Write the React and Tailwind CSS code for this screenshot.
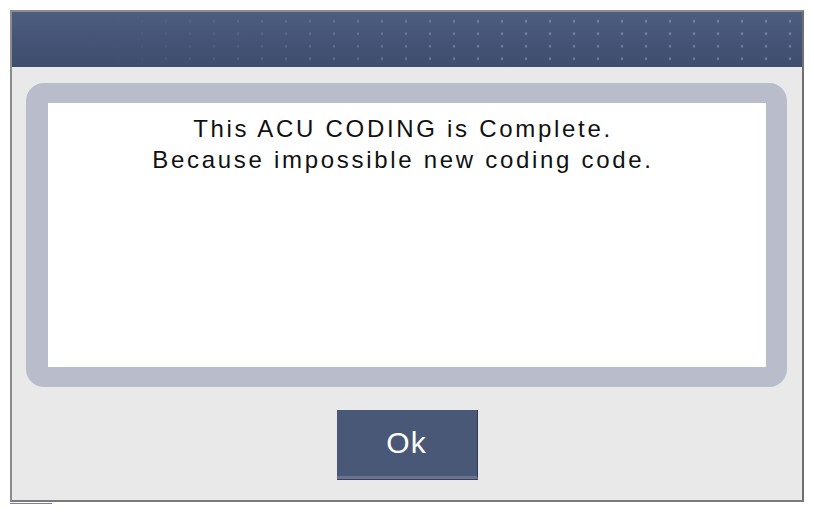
import React from "react";

const Header = () => (
  <div className="h-[55px] w-full bg-[linear-gradient(to_bottom,#4d5d7f,#3e4d6e)]">
    <div className="h-full w-full bg-[radial-gradient(circle,rgba(140,155,190,0.6)_1px,transparent_1.6px)] bg-[length:24px_12.5px] bg-[position:-2px_3px] [mask-image:linear-gradient(to_right,transparent_10%,black_65%)]" />
  </div>
);

const OkButton = () => (
  <button className="w-[141px] h-[69px] bg-[#4a5878] border-r border-r-[#2f3850] border-b-[3px] border-b-[#6a7390] shadow-[0_1px_0_#3a4256] text-white font-['Liberation_Sans',sans-serif] text-[30px] leading-none tracking-[1px] flex items-center justify-center">
    Ok
  </button>
);

export default function App() {
  return (
    <div className="w-[814px] h-[514px] bg-white relative">
      <div className="ml-[10px] pt-[10px]">
        <div className="w-[794px] h-[492px] border-2 border-[#8c8c8c] border-r-[#6f6f6f] border-b-[#7a7a7a] bg-[#e9e9e9] flex flex-col">
          <Header />
          <div className="mt-[16px] ml-[14px] w-[761px] h-[304px] rounded-[18px] bg-[#b8bccb] p-[20px] pl-[22px] pr-[21px]">
            <div className="w-full h-full bg-white pt-[10px] pr-[8px] text-center text-[#111] font-['Liberation_Sans',sans-serif] text-[24px] leading-[31px] tracking-[2.7px]">
              <p>This ACU CODING is Complete.</p>
              <p>Because impossible new coding code.</p>
            </div>
          </div>
          <div className="flex justify-center mt-[23px]">
            <OkButton />
          </div>
        </div>
        <div className="w-[42px] h-px bg-[#7878d8] mt-[1px]" />
      </div>
    </div>
  );
}
